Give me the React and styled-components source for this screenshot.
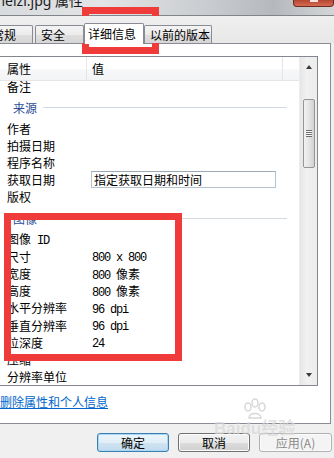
import React from 'react'
import styled, { createGlobalStyle } from 'styled-components'

const GlobalStyle = createGlobalStyle`
html, body {
  margin: 0;
  padding: 0;
}
body {
  background: #f0f0f0;
  font-family: "Noto Sans CJK SC", sans-serif;
  overflow: hidden;
}
`

const Window = styled.div`
position: relative;
width: 334px;
height: 458px;
overflow: hidden;
display: flex;
flex-direction: column;
background: #f0f0f0;
font-size: 12px;
color: #000;
`

const TitleBar = styled.div`
height: 15px;
flex: none;
display: flex;
align-items: flex-start;
overflow: hidden;
border-bottom: 1px solid #80858a;
background: linear-gradient(90deg, #d8dbde 0%, #e3e4e5 30%, #c9ccd0 62%, #b5b9bd 82%, #d3d5d7 100%);
`

const Title = styled.div`
margin: -9px 0 0 -8px;
font: 14px/20px "Noto Sans", "Noto Sans CJK SC", sans-serif;
color: #1b1b1b;
white-space: nowrap;
`

const CloseBtn = styled.div`
margin-left: auto;
width: 41px;
height: 7px;
box-sizing: border-box;
border: 1px solid #6e2a20;
border-top: none;
border-radius: 0 0 4px 4px;
background: linear-gradient(#b54632, #d66b52);
display: flex;
justify-content: center;

&::after {
  content: '';
  width: 8px;
  height: 2px;
  background: #f3e4e0;
}
`

const TabStrip = styled.div`
position: relative;
z-index: 1;
height: 27px;
flex: none;
display: flex;
align-items: flex-end;
margin-left: -14px;
background: linear-gradient(#efefef, #e8e8e8);
`

const Tab = styled.div`
width: ${p => p.$w}px;
height: ${p => (p.$active ? 21 : 18)}px;
margin-right: ${p => p.$gap || 0}px;
margin-bottom: ${p => (p.$active ? -1 : 0)}px;
box-sizing: border-box;
padding-left: ${p => (p.$active ? 3 : 5)}px;
border: 1px solid #898c95;
border-bottom: none;
border-radius: 2px 2px 0 0;
background: ${p => (p.$active ? '#fff' : 'linear-gradient(#f4f4f4, #ececec 50%, #dfdfdf 51%, #d6d6d6)')};
line-height: ${p => (p.$active ? 19 : 17)}px;
white-space: nowrap;
overflow: hidden;
`

const Panel = styled.div`
margin-left: -6px;
width: 337px;
height: 381px;
flex: none;
box-sizing: border-box;
padding: 12px 12px 0 3px;
border: 1px solid #898c95;
background: #fff;
display: flex;
flex-direction: column;
`

const List = styled.div`
width: 320px;
height: 330px;
flex: none;
box-sizing: border-box;
border: 1px solid #828790;
display: flex;
`

const ListMain = styled.div`
flex: 1;
display: flex;
flex-direction: column;
overflow: hidden;
`

const Header = styled.div`
height: 24px;
flex: none;
box-sizing: border-box;
display: flex;
border-bottom: 1px solid #e5e5e5;
background: linear-gradient(#ffffff, #ffffff 50%, #f7f8fa 51%, #f3f4f6);
`

const HeaderCell = styled.div`
width: ${p => (p.$w ? `${p.$w}px` : 'auto')};
flex: ${p => (p.$w ? 'none' : 1)};
box-sizing: border-box;
padding-left: ${p => p.$pad || 0}px;
border-right: ${p => (p.$w ? '1px solid #e3e5e8' : 'none')};
line-height: 23px;
`

const Body = styled.div`
flex: 1;
overflow: hidden;
`

const Row = styled.div`
height: 17.2px;
display: flex;
align-items: center;
white-space: nowrap;
margin-top: ${p => p.$shift || 0}px;
`

const Label = styled.div`
width: 88px;
flex: none;
box-sizing: border-box;
padding-left: 8px;
`

const Value = styled.div`
padding-left: 5px;
`

const DateField = styled.div`
width: 185px;
height: 17.2px;
margin-left: 4px;
box-sizing: border-box;
padding-left: 2px;
border: 1px solid #b5c3d1;
border-top-color: #9aa9b8;
line-height: 15px;
`

const Group = styled.div`
height: 25px;
display: flex;
align-items: center;
padding-left: 14px;
padding-right: 12px;
color: #2a4d95;

&::after {
  content: '';
  flex: 1;
  height: 1px;
  margin-left: 6px;
  background: #d3d9e0;
}
`

const Mono = styled.span`
font-family: "Liberation Mono", monospace;
font-size: 12px;
letter-spacing: -1.2px;
`

const ScrollBar = styled.div`
width: 17px;
flex: none;
display: flex;
flex-direction: column;
align-items: center;
background: linear-gradient(90deg, #e6e6e6, #f1f1f1 40%, #ececec);
border-left: 1px solid #ededed;
`

const ArrowBtn = styled.div`
height: 20px;
flex: none;
display: flex;
align-items: center;
justify-content: center;

&::after {
  content: '';
  border-left: 3.5px solid transparent;
  border-right: 3.5px solid transparent;
  ${p => (p.$down ? 'border-top: 4px solid #3a3a3a;' : 'border-bottom: 4px solid #3a3a3a;')}
}
`

const Track = styled.div`
flex: 1;
`

const Thumb = styled.div`
width: 12px;
height: 69px;
margin-top: 22px;
box-sizing: border-box;
border: 1px solid #959595;
border-radius: 2px;
background: linear-gradient(90deg, #f1f1f1, #e4e4e4 50%, #d2d2d2);
display: flex;
align-items: center;
justify-content: center;
`

const Grip = styled.div`
width: 6px;
height: 7px;
background: repeating-linear-gradient(#6d6d6d 0 1px, #f6f6f6 1px 2px);
`

const LinkText = styled.a`
margin: 10px 0 0 2px;
line-height: 12px;
color: #0066cc;
text-decoration: underline;
white-space: nowrap;
`

const Footer = styled.div`
flex: 1;
display: flex;
justify-content: flex-end;
align-items: flex-start;
gap: 9px;
padding: 9px 2px 0 0;
`

const Button = styled.div`
width: ${p => p.$w}px;
height: 19px;
box-sizing: border-box;
border: 1px solid ${p => (p.$primary ? '#3c7fb1' : p.$disabled ? '#adb2b5' : '#707070')};
border-radius: 3px;
background: ${p =>
  p.$primary
    ? 'linear-gradient(#edf5fa, #e1eef7 50%, #cfe3f1 51%, #c3dbee)'
    : p.$disabled
    ? '#f4f4f4'
    : 'linear-gradient(#f2f2f2, #ebebeb 50%, #dddddd 51%, #cfcfcf)'};
box-shadow: ${p => (p.$primary ? 'inset 0 0 0 1px #a9d7f3' : 'inset 0 0 0 1px #fbfbfb')};
color: ${p => (p.$disabled ? '#8a8a8a' : '#000')};
text-align: center;
line-height: 17px;
`

const Mark = styled.div`
position: absolute;
left: ${p => p.$x}px;
top: ${p => p.$y}px;
width: ${p => p.$w}px;
height: ${p => p.$h}px;
box-sizing: border-box;
border: 7px solid #f03b3b;
pointer-events: none;
`

const Watermark = styled.div`
position: absolute;
left: 214px;
top: 398px;
display: flex;
flex-direction: column;
align-items: center;
color: rgba(215, 215, 215, 0.7);
font: bold 17px/18px "Liberation Sans", "Noto Sans CJK SC", sans-serif;
pointer-events: none;
`

const mixed = s =>
  s.split(/([\x00-\x7f]+)/).filter(Boolean).map((part, i) =>
    /^[\x00-\x7f]+$/.test(part) ? <Mono key={i}>{part}</Mono> : part
  )

const sourceRows = ['作者', '拍摄日期', '程序名称', '获取日期', '版权']

const imageRows = [
  ['图像 ID', ''],
  ['尺寸', '800 x 800'],
  ['宽度', '800 像素'],
  ['高度', '800 像素'],
  ['水平分辨率', '96 dpi'],
  ['垂直分辨率', '96 dpi'],
  ['位深度', '24'],
  ['压缩', ''],
  ['分辨率单位', ''],
]

const App = () => {
  return (
    <Window>
      <GlobalStyle />
      <TitleBar>
        <Title>meizi.jpg 属性</Title>
        <CloseBtn />
      </TitleBar>

      <TabStrip>
        <Tab $w={47} $gap={2}>常规</Tab>
        <Tab $w={49}>安全</Tab>
        <Tab $w={60} $active>详细信息</Tab>
        <Tab $w={68}>以前的版本</Tab>
      </TabStrip>

      <Panel>
        <List>
          <ListMain>
            <Header>
              <HeaderCell $w={88} $pad={8}>属性</HeaderCell>
              <HeaderCell $w={196} $pad={5}>值</HeaderCell>
              <HeaderCell />
            </Header>
            <Body>
              <Row $shift={-3.6}>
                <Label>备注</Label>
              </Row>
              <Group>来源</Group>
              {sourceRows.map(name => (
                <Row key={name}>
                  <Label>{name}</Label>
                  {name === '获取日期' && <DateField>指定获取日期和时间</DateField>}
                </Row>
              ))}
              <Group>图像</Group>
              {imageRows.map(([name, val]) => (
                <Row key={name}>
                  <Label>{mixed(name)}</Label>
                  <Value>{mixed(val)}</Value>
                </Row>
              ))}
            </Body>
          </ListMain>
          <ScrollBar>
            <ArrowBtn />
            <Track>
              <Thumb>
                <Grip />
              </Thumb>
            </Track>
            <ArrowBtn $down />
          </ScrollBar>
        </List>
        <LinkText>删除属性和个人信息</LinkText>
      </Panel>

      <Footer>
        <Button $w={72} $primary>确定</Button>
        <Button $w={72}>取消</Button>
        <Button $w={73} $disabled>应用(A)</Button>
      </Footer>

      <Watermark>
        <svg width="30" height="22" viewBox="0 0 30 22">
          <g fill="none" stroke="rgba(205,205,205,0.8)" strokeWidth="1.5">
            <ellipse cx="8" cy="9" rx="3" ry="4" />
            <ellipse cx="15" cy="5" rx="3" ry="4" />
            <ellipse cx="22" cy="9" rx="3" ry="4" />
            <path d="M9 20 C9 14 21 14 21 20 Z" />
          </g>
        </svg>
        <span>Baidu经验</span>
      </Watermark>

      <Mark $x={82} $y={7} $w={77} $h={47} />
      <Mark $x={4} $y={213} $w={178} $h={148} />
    </Window>
  )
}

export default App
